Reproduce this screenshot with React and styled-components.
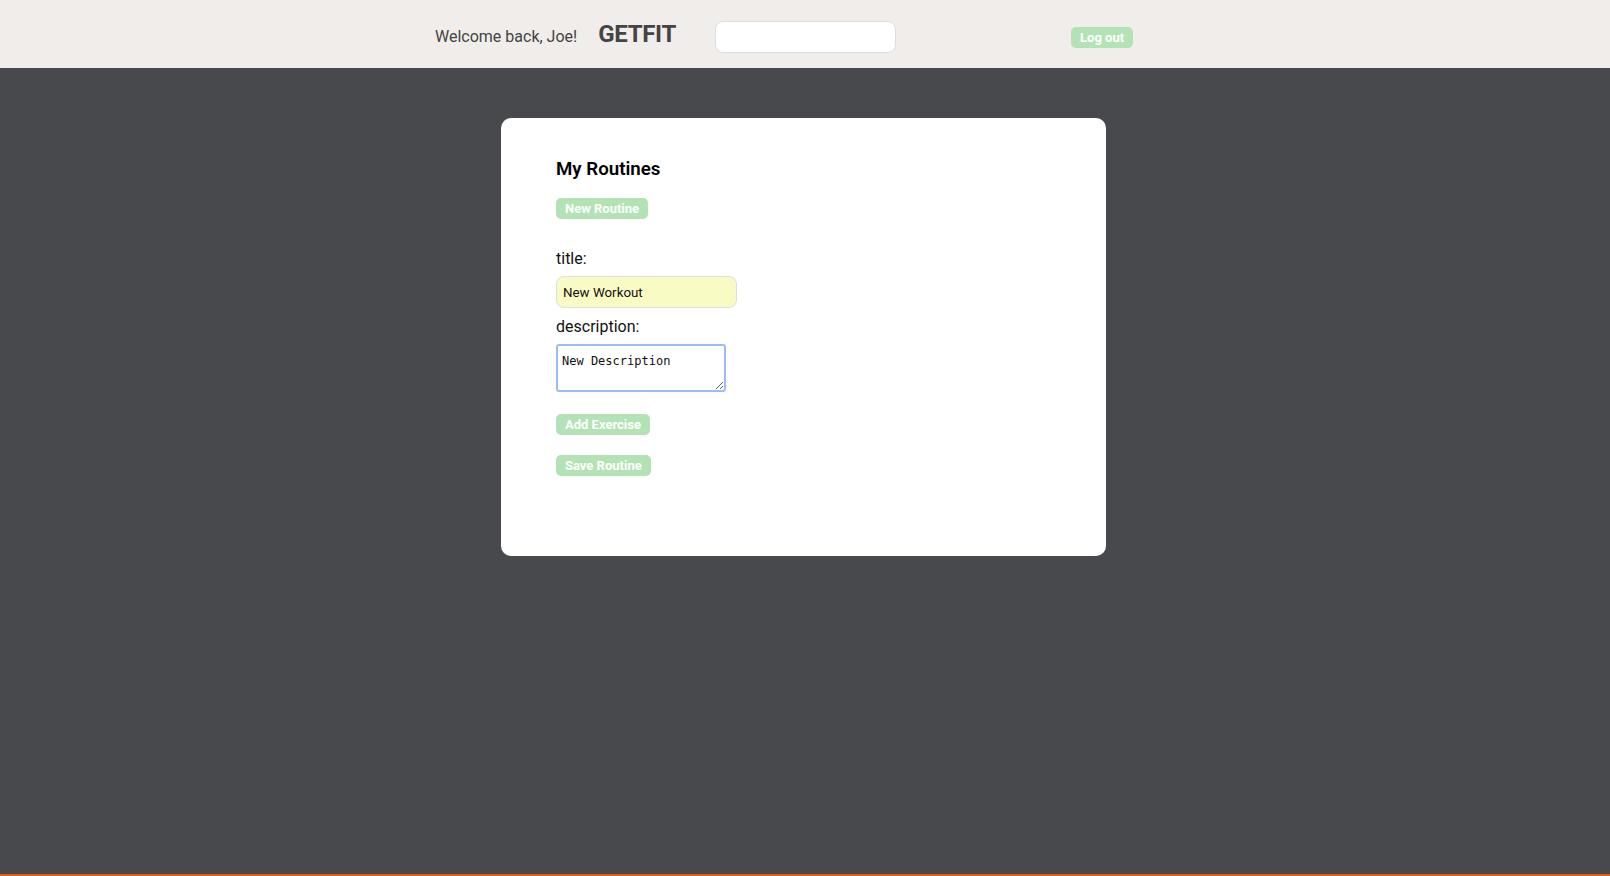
import styled, { createGlobalStyle } from "styled-components";

const GlobalStyle = createGlobalStyle`
    html, body {
        margin: 0;
        padding: 0;
    }
    body {
        font-family: Roboto, "Liberation Sans", Arial, sans-serif;
        background: #48494d;
    }
`;

const StyledPage = styled.div`
    min-height: 100vh;
    box-sizing: border-box;
    background: #48494d;
    border-bottom: 2px solid #d9622b;
`;

const StyledHeader = styled.header`
    display: flex;
    align-items: flex-start;
    height: 68px;
    padding-left: 435px;
    background: #f0edea;
    box-sizing: border-box;
`;

const StyledWelcome = styled.span`
    margin-top: 27px;
    font-size: 16px;
    line-height: 19px;
    color: #444;
`;

const StyledLogo = styled.h1`
    margin: 20px 0 0 21px;
    font-size: 24px;
    line-height: 28px;
    font-weight: 700;
    color: #444;
    letter-spacing: -0.3px;
`;

const StyledSearch = styled.input`
    margin: 21px 0 0 39px;
    width: 181px;
    height: 32px;
    box-sizing: border-box;
    border: 1px solid #ddd;
    border-radius: 8px;
    background: #fff;
    outline: none;
`;

const StyledButton = styled.button`
    display: inline-flex;
    align-items: center;
    justify-content: center;
    height: 21px;
    padding: 0 9px;
    border: none;
    border-radius: 5px;
    background: #b3e3b5;
    color: #fff;
    font-family: Roboto, "Liberation Sans", Arial, sans-serif;
    font-size: 13px;
    font-weight: 700;
    cursor: pointer;
    margin-top: ${({$top}) => $top || 0}px;
    margin-left: ${({$left}) => $left || 0}px;
`;

const StyledMain = styled.div`
    padding: 50px 3px 0 0;
`;

const StyledCard = styled.main`
    width: 605px;
    margin: 0 auto;
    padding: 39px 55px 80px;
    box-sizing: border-box;
    background: #fff;
    border-radius: 10px;
    display: flex;
    flex-direction: column;
    align-items: flex-start;
`;

const StyledCardTitle = styled.h2`
    margin: 0 0 17px;
    font-size: 18.72px;
    line-height: 24px;
    font-weight: 600;
    color: #000;
`;

const StyledForm = styled.form`
    display: flex;
    flex-direction: column;
    align-items: flex-start;
    margin-top: 30px;
`;

const StyledLabel = styled.label`
    font-size: 16px;
    line-height: 19px;
    color: #111;
    margin-top: ${({$top}) => $top || 0}px;
    margin-bottom: 8px;
`;

const StyledTitleInput = styled.input`
    width: 181px;
    height: 32px;
    box-sizing: border-box;
    padding: 0 6px;
    border: 1px solid #ddd;
    border-radius: 8px;
    background: #f9fbc4;
    font-family: Roboto, sans-serif;
    font-size: 13.33px;
    color: #111;
    outline: none;
`;

const StyledTextArea = styled.textarea`
    width: 170px;
    height: 48px;
    box-sizing: border-box;
    padding: 8px 4px 4px;
    border: 2px solid #9cbcf5;
    border-radius: 3px;
    font-family: "DejaVu Sans Mono", monospace;
    font-size: 12px;
    line-height: 14px;
    color: #111;
    outline: none;
    margin-bottom: 22px;
`;

function App() {
    return (
        <StyledPage>
            <GlobalStyle/>
            <StyledHeader>
                <StyledWelcome>Welcome back, Joe!</StyledWelcome>
                <StyledLogo>GETFIT</StyledLogo>
                <StyledSearch type="text"/>
                <StyledButton $top={27} $left={175}>Log out</StyledButton>
            </StyledHeader>
            <StyledMain>
                <StyledCard>
                    <StyledCardTitle>My Routines</StyledCardTitle>
                    <StyledButton>New Routine</StyledButton>
                    <StyledForm onSubmit={e => e.preventDefault()}>
                        <StyledLabel>title:</StyledLabel>
                        <StyledTitleInput defaultValue="New Workout"/>
                        <StyledLabel $top={9}>description:</StyledLabel>
                        <StyledTextArea defaultValue="New Description"/>
                        <StyledButton type="button">Add Exercise</StyledButton>
                        <StyledButton type="button" $top={20}>Save Routine</StyledButton>
                    </StyledForm>
                </StyledCard>
            </StyledMain>
        </StyledPage>
    );
}

export default App;
